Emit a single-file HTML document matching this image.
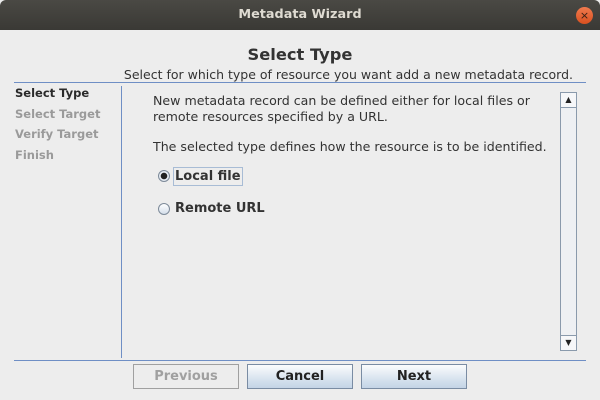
<!DOCTYPE html>
<html><head><style>
*{margin:0;padding:0;box-sizing:border-box}
body{width:600px;height:400px;background:#ededed;font-family:"DejaVu Sans","Liberation Sans",sans-serif;position:relative;overflow:hidden;color:#333}
.abs{position:absolute;white-space:nowrap}
#tb{left:0;top:0;width:600px;height:30px;background:linear-gradient(#4a4944,#3a3935);border-radius:6px 6px 0 0}
#tt{left:0;width:600px;top:7px;text-align:center;color:#dfdbd2;font-weight:bold;font-size:12.8px}
#cl{left:576px;top:7px;width:17px;height:17px;border-radius:50%;background:linear-gradient(#f07a4e,#d9501f);color:#3a2015;font-size:11px;text-align:center;line-height:17px}
.nav{font-size:11.5px;font-weight:bold;color:#9a9a9a;left:15px}
.btn{top:364px;height:25px;width:106px;border:1px solid #7a8ca3;background:linear-gradient(#fbfcfd,#d2dfec 70%,#c4d4e6);text-align:center;font-weight:bold;font-size:13px;line-height:24px;color:#222}
.t{font-size:12.6px;color:#333}
</style></head><body>
<div id="tb" class="abs"></div>
<div id="tt" class="abs">Metadata Wizard</div>
<div id="cl" class="abs">×</div>
<div class="abs" style="left:0;width:600px;top:45px;text-align:center;font-size:16.3px;font-weight:bold;color:#333">Select Type</div>
<div class="abs t" style="left:110px;top:67px;width:463px;text-align:right;font-size:12.5px">Select for which type of resource you want add a new metadata record.</div>
<div class="abs" style="left:14px;top:82px;width:572px;height:1px;background:#6f8fc5"></div>
<div class="abs nav" style="top:86px;color:#2a2a2a">Select Type</div>
<div class="abs nav" style="top:107px">Select Target</div>
<div class="abs nav" style="top:127px">Verify Target</div>
<div class="abs nav" style="top:148px">Finish</div>
<div class="abs" style="left:121px;top:86px;width:1px;height:272px;background:#6f8fc5"></div>
<div class="abs t" style="left:153px;top:93px">New metadata record can be defined either for local files or</div>
<div class="abs t" style="left:153px;top:109px">remote resources specified by a URL.</div>
<div class="abs t" style="left:153px;top:139px">The selected type defines how the resource is to be identified.</div>
<div class="abs" style="left:158px;top:170px;width:12px;height:12px;border-radius:50%;border:1px solid #7d8a99;background:radial-gradient(#222 0 3px,#e6ecf3 3.5px)"></div>
<div class="abs t" style="left:173px;top:167px;font-weight:bold;border:1px solid #a8bcd5;padding:0 1px;line-height:17px;font-size:13px">Local file</div>
<div class="abs" style="left:158px;top:203px;width:12px;height:12px;border-radius:50%;border:1px solid #7d8a99;background:linear-gradient(#fff,#d4deea)"></div>
<div class="abs t" style="left:175px;top:201px;font-weight:bold;font-size:13px">Remote URL</div>
<div class="abs" style="left:560px;top:92px;width:17px;height:259px;border:1px solid #8a9aac;background:#eef0f3"></div>
<div class="abs" style="left:560px;top:92px;width:17px;height:16px;border:1px solid #8a9aac;background:#f6f7f9;font-size:8px;text-align:center;line-height:14px;color:#222">▲</div>
<div class="abs" style="left:560px;top:335px;width:17px;height:16px;border:1px solid #8a9aac;background:#f6f7f9;font-size:8px;text-align:center;line-height:14px;color:#222">▼</div>
<div class="abs" style="left:14px;top:360px;width:572px;height:1px;background:#6f8fc5"></div>
<div class="abs btn" style="left:133px;background:#ededed;border-color:#a0a0a0;color:#a0a0a0">Previous</div>
<div class="abs btn" style="left:247px">Cancel</div>
<div class="abs btn" style="left:361px">Next</div>
</body></html>
